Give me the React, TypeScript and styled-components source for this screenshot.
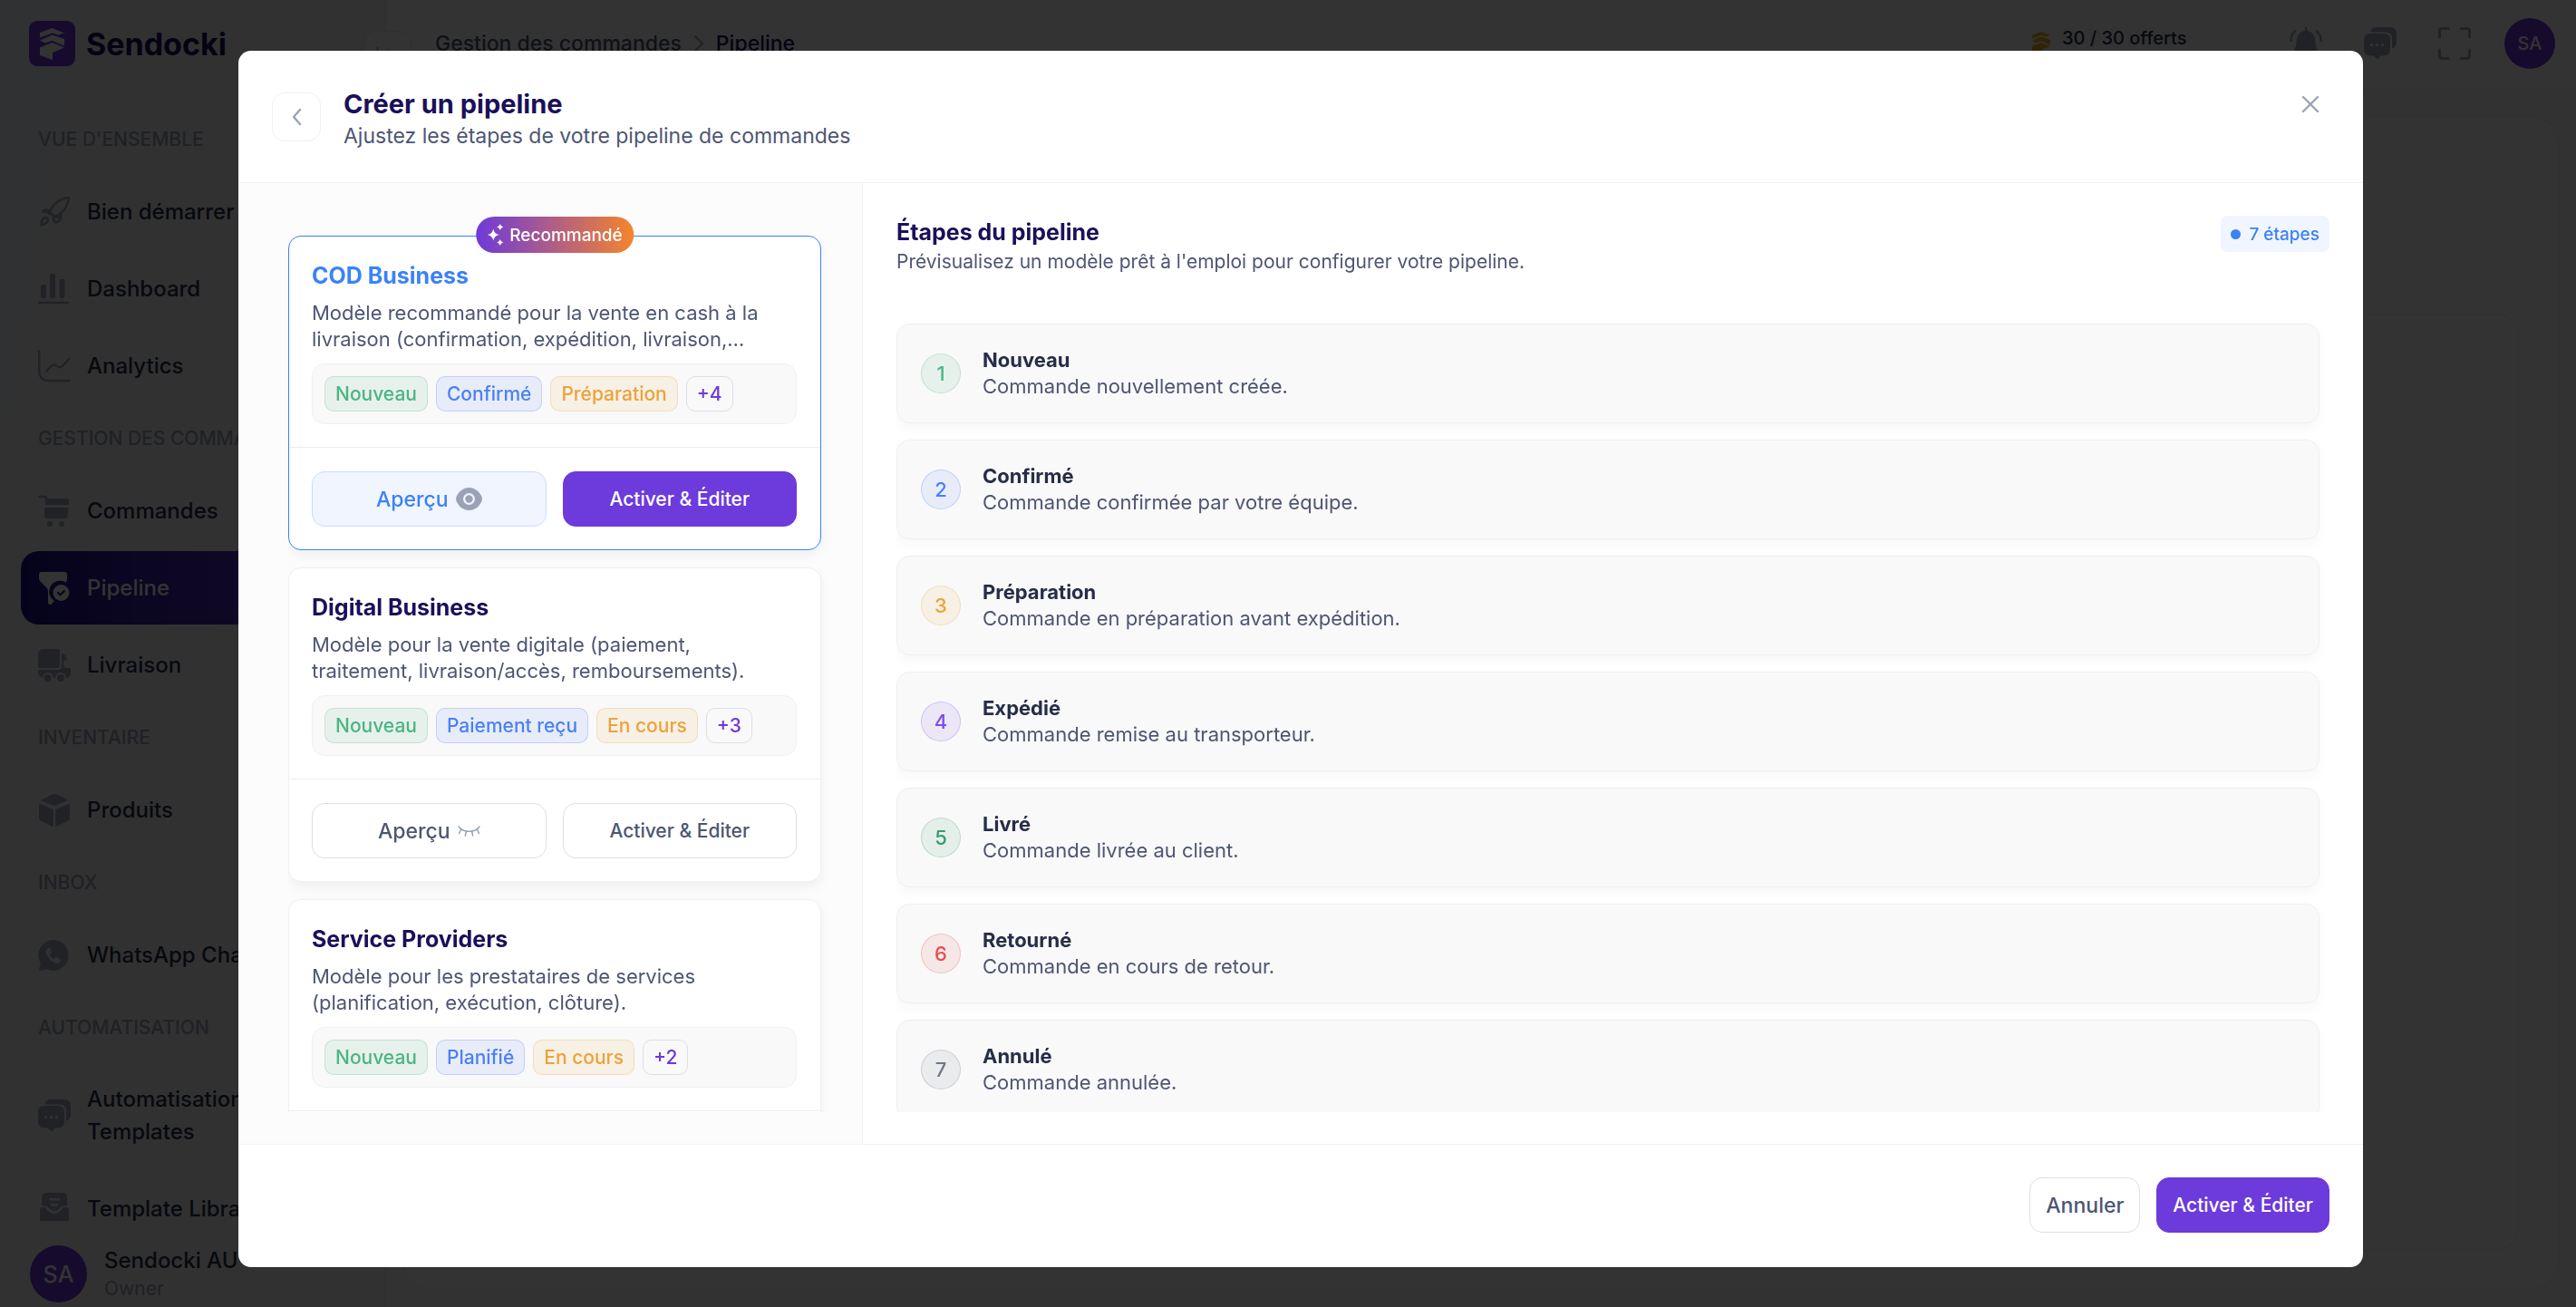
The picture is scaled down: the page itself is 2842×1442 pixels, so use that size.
import React from "react";
import styled, { createGlobalStyle } from "styled-components";

const c = {
  navy: "#1b1059",
  ink: "#262d47",
  text: "#4d5673",
  muted: "#9aa3b5",
  icon: "#a3acbf",
  purple: "#6d3adb",
  blue: "#3b82f6",
  line: "#f1f1f3",
  field: "#dedeea",
};

const Global = createGlobalStyle`
  *, *::before, *::after { box-sizing: border-box; }
  html, body, #root { height: 100%; }
  body { margin: 0; overflow: hidden; background: #fff; }
  body, button { font-family: Inter, "Liberation Sans", sans-serif; }
  h1, h2, h3, p, ul, ol { margin: 0; padding: 0; }
  ul, ol { list-style: none; }
  button { margin: 0; padding: 0; border: 0; background: none; cursor: pointer; }
  a { color: inherit; text-decoration: none; }
  svg { display: block; flex: none; }
`;

/* ---------- application shell ---------- */

const Shell = styled.div`
  display: grid;
  grid-template-columns: 426px minmax(0, 1fr);
  height: 100vh;
  overflow: hidden;
`;

const Sidebar = styled.aside`
  display: flex;
  flex-direction: column;
  min-height: 0;
  border-right: 1px solid #ececf2;
  background: linear-gradient(100deg, #f0f4f8, #f6f6fb 50%, #f4f2f8);
`;

const Brand = styled.a`
  display: flex;
  align-items: center;
  gap: 12px;
  flex: none;
  height: 99px;
  padding: 0 32px 2px;
  border-bottom: 1px solid #ebedf2;
  color: ${c.navy};
  font-size: 34px;
  font-weight: 700;
`;

const LogoTile = styled.span`
  display: grid;
  place-items: center;
  width: 51px;
  height: 50px;
  border-radius: 9px;
  background: ${c.purple};
  color: #fff;
`;

const Nav = styled.nav`
  display: flex;
  flex-direction: column;
  gap: 22px;
  flex: 1;
  min-height: 0;
  overflow: hidden;
  padding: 37px 23px 0;
`;

const NavGroup = styled.section`
  display: flex;
  flex-direction: column;
  flex: none;
  gap: 21px;
`;

const NavLabel = styled.h2`
  padding-left: 19px;
  color: ${c.muted};
  font-size: 21px;
  font-weight: 500;
  line-height: 36px;
  text-transform: uppercase;
  white-space: nowrap;
`;

const NavList = styled.ul`
  display: flex;
  flex-direction: column;
  gap: 4px;
`;

const NavLink = styled.a<{ $active?: boolean }>`
  display: flex;
  align-items: center;
  gap: 18px;
  min-height: 81px;
  padding: 22px 19px;
  border-radius: 20px;
  background: ${(p) => (p.$active ? "linear-gradient(90deg, #1c1088, #6d3adb)" : "none")};
  color: ${(p) => (p.$active ? "#fff" : c.ink)};
  font-size: 24px;
  font-weight: 500;
  line-height: 36px;

  svg { color: ${(p) => (p.$active ? "#fff" : c.icon)}; }
`;

const Profile = styled.div`
  display: flex;
  align-items: center;
  gap: 19px;
  flex: none;
  height: 95px;
  padding: 22px 33px 0;
  background: #f3f3f7;
`;

const Avatar = styled.span<{ $size: number }>`
  display: grid;
  place-items: center;
  flex: none;
  width: ${(p) => p.$size}px;
  height: ${(p) => p.$size}px;
  border-radius: 50%;
  background: ${c.purple};
  color: #fff;
  font-size: ${(p) => (p.$size > 60 ? 25 : 20)}px;
  font-weight: 500;
`;

const ProfileName = styled.p`
  color: ${c.ink};
  font-size: 24px;
  font-weight: 500;
  line-height: 32px;
`;

const ProfileRole = styled.p`
  color: ${c.muted};
  font-size: 21px;
  line-height: 30px;
`;

const Content = styled.div`
  display: flex;
  flex-direction: column;
  min-width: 0;
  background: #fafafa;
`;

const Topbar = styled.header`
  position: relative;
  display: flex;
  align-items: center;
  gap: 37px;
  flex: none;
  height: 99px;
  padding: 0 23px 3px 54px;
  border-bottom: 1px solid #f0f0f2;
  background: #fff;
`;

const Toggle = styled.button`
  position: absolute;
  left: -25px;
  top: 34px;
  display: grid;
  place-items: center;
  width: 53px;
  height: 53px;
  border: 1px solid #e9e9ef;
  border-radius: 14px;
  background: #fff;
  color: ${c.icon};
`;

const Crumbs = styled.nav`
  display: flex;
  align-items: center;
  gap: 12px;
  margin-right: auto;
  color: ${c.text};
  font-size: 23px;
  font-weight: 500;
  line-height: 30px;

  strong { color: ${c.navy}; font-weight: 500; }
  svg { color: ${c.icon}; }
`;

const Quota = styled.div`
  display: grid;
  grid-template-columns: auto 190px;
  align-items: center;
  gap: 6px 13px;
  margin-right: 24px;
  color: ${c.ink};
  font-size: 20px;
  font-weight: 500;
  line-height: 28px;
`;

const Coin = styled.span`
  grid-row: 1 / 3;
  color: #f5ad1e;
`;

const QuotaBar = styled.span`
  height: 6px;
  border-radius: 3px;
  background: #f5ad1e;
`;

const Tools = styled.div`
  display: flex;
  gap: 46px;
`;

const IconButton = styled.button`
  color: ${c.icon};
`;

const Main = styled.main`
  flex: 1;
  min-height: 0;
  padding: 29px 19px 19px;
`;

const Board = styled.div`
  height: 100%;
  padding: 217px 43px 43px 39px;
  border: 1px solid #f1f1f3;
  border-radius: 30px;
  background: #fcfcfc;
`;

const BoardInner = styled.div`
  height: 100%;
  border: 1px solid #f1f1f3;
  border-radius: 24px;
`;

/* ---------- dialog ---------- */

const Overlay = styled.div`
  position: fixed;
  inset: 0;
  display: grid;
  grid-template-rows: minmax(0, 1fr);
  padding: 56px 235px 44px 263px;
  background: rgba(0, 0, 0, 0.8);
`;

const Dialog = styled.div`
  display: flex;
  flex-direction: column;
  min-height: 0;
  border-radius: 14px;
  background: #fff;
  overflow: hidden;
`;

const DialogHeader = styled.header`
  display: flex;
  align-items: center;
  gap: 25px;
  padding: 38px 36px 37px 37px;
  border-bottom: 1px solid ${c.line};
`;

const BackButton = styled.button`
  display: grid;
  place-items: center;
  width: 54px;
  height: 54px;
  border: 1px solid ${c.line};
  border-radius: 14px;
  color: ${c.muted};
`;

const DialogHeading = styled.div`
  flex: 1;
`;

const DialogTitle = styled.h1`
  color: ${c.navy};
  font-size: 29px;
  font-weight: 700;
  line-height: 42px;
`;

const DialogSubtitle = styled.p`
  color: ${c.text};
  font-size: 23px;
  line-height: 28px;
`;

const CloseButton = styled.button`
  display: grid;
  place-items: center;
  align-self: flex-start;
  width: 44px;
  height: 42px;
  color: ${c.muted};
`;

const DialogBody = styled.div`
  display: grid;
  grid-template-columns: 689px minmax(0, 1fr);
  grid-template-rows: minmax(0, 1fr);
  flex: 1;
  min-height: 0;
`;

const TemplatePane = styled.section`
  min-height: 0;
  padding: 36px 35px 35px 55px;
  border-right: 1px solid #f3f3f3;
  background: #fcfcfc;
`;

const TemplateScroll = styled.ul`
  display: flex;
  flex-direction: column;
  gap: 19px;
  height: 100%;
  overflow: hidden;
  padding: 22px 10px 0 0;
`;

const TemplateCard = styled.li<{ $selected?: boolean }>`
  position: relative;
  flex: none;
  border: 1px solid ${(p) => (p.$selected ? c.blue : "#f0f0f0")};
  border-radius: 14px;
  background: #fff;
  box-shadow: 0 6px 14px rgba(0, 0, 0, 0.05);
`;

const Recommended = styled.span`
  position: absolute;
  top: -22px;
  left: 50%;
  display: flex;
  align-items: center;
  gap: 6px;
  height: 40px;
  padding: 0 12px;
  border-radius: 20px;
  background: linear-gradient(90deg, #6d3adb, #f5842c);
  color: #fff;
  font-size: 19px;
  font-weight: 500;
  transform: translateX(-50%);
`;

const TemplateInfo = styled.div`
  padding: 26px 26px 25px 25px;
`;

const TemplateName = styled.h2<{ $selected?: boolean }>`
  margin-bottom: 10px;
  color: ${(p) => (p.$selected ? c.blue : c.navy)};
  font-size: 25px;
  font-weight: 700;
  line-height: 34px;
`;

const TemplateText = styled.p`
  margin-bottom: 12px;
  padding-right: 10px;
  color: ${c.text};
  font-size: 22px;
  line-height: 29px;
`;

const ChipRow = styled.ul`
  display: flex;
  gap: 9px;
  padding: 13px;
  border: 1px solid #f1f1f1;
  border-radius: 14px;
  background: #f9f9f9;
`;

const Chip = styled.li<{ $color?: string }>`
  padding: 0 11px;
  border: 1px solid ${(p) => (p.$color ? p.$color + "40" : c.field)};
  border-radius: 10px;
  background: ${(p) => (p.$color ? p.$color + "1a" : "transparent")};
  color: ${(p) => p.$color || c.purple};
  font-size: 21px;
  font-weight: 500;
  line-height: 37px;
`;

const TemplateActions = styled.div`
  display: grid;
  grid-template-columns: 1fr 1fr;
  gap: 18px;
  padding: 26px 26px 25px 25px;
  border-top: 1px solid #ededef;
`;

const Button = styled.button<{ $tone?: "primary" | "soft"; $large?: boolean }>`
  display: flex;
  align-items: center;
  justify-content: center;
  gap: 8px;
  height: 61px;
  padding: 0 17px;
  border: 1px solid ${(p) => (p.$tone === "primary" ? c.purple : p.$tone === "soft" ? "#cbdefd" : c.field)};
  border-radius: 14px;
  background: ${(p) => (p.$tone === "primary" ? c.purple : p.$tone === "soft" ? "#f0f5ff" : "#fff")};
  color: ${(p) => (p.$tone === "primary" ? "#fff" : p.$tone === "soft" ? c.blue : c.text)};
  font-size: ${(p) => (p.$large ? 23 : 21)}px;
  font-weight: 500;

  svg { color: ${c.muted}; }
`;

const StagePane = styled.section`
  display: flex;
  flex-direction: column;
  gap: 53px;
  min-width: 0;
  min-height: 0;
  padding: 36px 37px 35px;
`;

const StageHeader = styled.header`
  display: flex;
  align-items: flex-start;
  justify-content: space-between;
`;

const StageTitle = styled.h2`
  color: ${c.navy};
  font-size: 25px;
  font-weight: 700;
  line-height: 36px;
`;

const StageSubtitle = styled.p`
  color: ${c.text};
  font-size: 21px;
  line-height: 30px;
`;

const StageCount = styled.span`
  display: flex;
  align-items: center;
  gap: 9px;
  height: 40px;
  padding: 0 11px;
  border-radius: 8px;
  background: #f0f5ff;
  color: ${c.blue};
  font-size: 19px;
  font-weight: 500;

  &::before {
    content: "";
    width: 11px;
    height: 11px;
    border-radius: 50%;
    background: ${c.blue};
  }
`;

const StageList = styled.ol`
  display: flex;
  flex-direction: column;
  gap: 18px;
  flex: 1;
  min-height: 0;
  overflow: hidden;
  padding-right: 11px;
`;

const StageItem = styled.li`
  display: flex;
  align-items: center;
  gap: 24px;
  flex: none;
  padding: 25px 26px;
  border: 1px solid #f0f0f0;
  border-radius: 14px;
  background: #f9f9f9;
  box-shadow: 0 6px 14px rgba(0, 0, 0, 0.03);
`;

const StageNumber = styled.span<{ $color: string }>`
  display: grid;
  place-items: center;
  flex: none;
  width: 44px;
  height: 44px;
  border: 1px solid ${(p) => p.$color}40;
  border-radius: 50%;
  background: ${(p) => p.$color}1a;
  color: ${(p) => p.$color};
  font-size: 22px;
  font-weight: 500;
`;

const StageName = styled.h3`
  color: ${c.ink};
  font-size: 22px;
  font-weight: 700;
  line-height: 29px;
`;

const StageText = styled.p`
  color: ${c.text};
  font-size: 22px;
  line-height: 29px;
`;

const DialogFooter = styled.footer`
  display: flex;
  justify-content: flex-end;
  gap: 18px;
  padding: 36px 37px 38px;
  border-top: 1px solid ${c.line};
`;

/* ---------- icons ---------- */

const Svg = ({ size = 36, children }: { size?: number; children: React.ReactNode }) => (
  <svg width={size} height={size} viewBox="0 0 36 36" fill="none" aria-hidden="true">
    {children}
  </svg>
);

const stroke = {
  stroke: "currentColor",
  strokeWidth: 2.4,
  strokeLinecap: "round" as const,
  strokeLinejoin: "round" as const,
};

const LogoMark = ({ width = 27, height = 35 }) => (
  <svg width={width} height={height} viewBox="0 0 27 35" fill="currentColor" aria-hidden="true">
    <path d="M0 5 13.500 0 27 5.500 20.500 7.500 13.500 5.500 0 10.500Z" />
    <path d="M0 13.500 13.500 7.500 27 12V19.500L13.500 14 6 16.500Z" />
    <path d="M0 21.500 13.500 16 27 21.500 14 27V35L0 30Z" />
  </svg>
);

const RocketIcon = () => (
  <Svg>
    <g {...stroke}>
      <path d="M13 18C16 9 24 3 34 2c-1 10-7 18-16 21z" />
      <path d="M13.500 17.500C10 14.500 6 15 5.500 18c3-.5 6 .5 8 2.500" />
      <path d="M18 23c3 1.500 7 1.500 7.500-2.500 0 5-2 9-7 9-.8-2-1.200-3-2-5" />
      <path d="M3.500 32.500c0-5 2-8 5-8.500 2.500 0 3.500 3 1.500 5-1.500 2-4 2.500-6.500 3.500z" />
    </g>
  </Svg>
);

const BarsIcon = () => (
  <Svg>
    <rect x="3" y="13" width="6" height="15" rx="2" fill="currentColor" />
    <rect x="13" y="1" width="6" height="27" rx="2" fill="currentColor" />
    <rect x="23.500" y="7" width="6" height="21" rx="2" fill="currentColor" />
    <path d="M1 33h32" {...stroke} />
  </Svg>
);

const ChartIcon = () => (
  <Svg>
    <g {...stroke}>
      <path d="M1.200 1.500V23c0 7 4 11 10 11h23.600" />
      <path d="M9 24c5-7 9-9 12-6s6 1 13-8" />
    </g>
  </Svg>
);

const CartIcon = () => (
  <Svg>
    <path d="M1.500 2h6c1.500 0 2 2 2.500 4" {...stroke} />
    <path d="M8 4h23q3 0 3 3v4H8zM7 14h26.500l-1 9q-.3 3-3 3H10q-3 0-3-3z" fill="currentColor" />
    <circle cx="13" cy="32" r="3" fill="currentColor" />
    <circle cx="26" cy="32" r="3" fill="currentColor" />
  </Svg>
);

const FunnelIcon = () => (
  <Svg>
    <path
      d="M4 0h25q3 0 3 3v5q0 2-1.500 3.500A11 11 0 0 0 18 32l-3.500 4q-3.500.5-3.500-2.500V21q0-2-1.500-3.500L2.500 10.500Q1 9 1 7V3q0-3 3-3z"
      fill="currentColor"
    />
    <path
      fillRule="evenodd"
      d="M25.500 14a9 9 0 1 1 0 18 9 9 0 0 1 0-18zm-4.900 9 3.700 3.700 6-5.300-1.500-1.700-4.500 4-2.200-2.200z"
      fill="currentColor"
    />
  </Svg>
);

const TruckIcon = () => (
  <Svg>
    <path d="M6 0h15q3 0 3 3v14q0 4-3 4H0V6q0-6 6-6z" fill="currentColor" />
    <path
      d="M26 5c4 0 5.500 4 6.500 7-3.500 0-4.500 1-4.500 4s1 5 4 5h4v5q0 6-5 6a6 6 0 0 0-12 0h-2a6 6 0 0 0-12 0Q0 31 0 23h22q4 0 4-5z"
      fill="currentColor"
    />
    <circle cx="10.500" cy="32" r="4" fill="currentColor" />
    <circle cx="25" cy="32" r="4" fill="currentColor" />
  </Svg>
);

const BoxIcon = () => (
  <Svg>
    <path d="M18 0q2 0 4 1l11 6-15 6L3 7l11-6q2-1 4-1z" fill="currentColor" />
    <path d="M1 10.500 16.800 17v19q-2-.3-4-1.500L3 29.500Q1 28.500 1 26zM35 10.500 19.200 17v19q2-.3 4-1.500l9.800-5q2-1 2-3.500z" fill="currentColor" />
  </Svg>
);

const WhatsAppIcon = () => (
  <Svg>
    <path
      fillRule="evenodd"
      d="M17 1a17 17 0 1 1-8 32.200L3 34.800Q.8 35 1.200 33l1.600-6.200A17 17 0 0 1 17 1zm-5 8.500c-3 1.500-4 4-2.500 7.500 2 4.500 5 7.500 9.500 9.500 3 1.500 5.500 0 6-2.500 0-2-5-4.500-6-3.500l-1.500 1.500c-2-1-3.500-2.500-4.500-4.500L14.500 16c.8-1-1-6.500-2.500-6.500z"
      fill="currentColor"
    />
  </Svg>
);

const ChatIcon = () => (
  <Svg>
    <path d="M13 0h16q7 0 7 7v10q0 5-5 6.500V13q0-7.500-7.500-7.500H7.500Q8 0 13 0z" fill="currentColor" />
    <path
      fillRule="evenodd"
      d="M7 7h15q7 0 7 7v10q0 7.500-7 7.500h-3.500L15 36l-4-4.500H7Q0 31.500 0 24V14q0-7 7-7zm1.500 11a1.600 1.600 0 1 0 0 3.200 1.600 1.600 0 0 0 0-3.200zm6 0a1.600 1.600 0 1 0 0 3.200 1.600 1.600 0 0 0 0-3.200zm6 0a1.600 1.600 0 1 0 0 3.200 1.600 1.600 0 0 0 0-3.200z"
      fill="currentColor"
    />
  </Svg>
);

const LibraryIcon = () => (
  <Svg>
    <path
      fillRule="evenodd"
      d="M9 0h18q5 0 5 5v9l-6 1q-4 5-8 5t-8-5l-6-1V5q0-5 5-5zm3 6v2.500h12V6zm2 6v2.500h8V12z"
      fill="currentColor"
    />
    <path d="M2 18.500q0-2.500 3-2.500h3q4.500 7 10 7t10-7h3q3 0 3 2.500V36H2z" fill="currentColor" />
  </Svg>
);

const BellIcon = () => (
  <Svg>
    <path d="M18 1v4" {...stroke} />
    <path d="M18 4c-7 0-10 5-10.500 12C7 22 5.500 25 4 29h28c-1.500-4-3-7-3.500-13C28 9 25 4 18 4z" fill="currentColor" />
    <path d="M6 4.500Q1 9 1.500 15M30 4.500q5 4.500 4.500 10.500M14 33q4 3 8 0" {...stroke} />
  </Svg>
);

const ExpandIcon = () => (
  <Svg>
    <path d="M1.500 11V4q0-2.500 2.500-2.500h7M25 1.500h7q2.500 0 2.500 2.500v7M34.500 25v7q0 2.500-2.500 2.500h-7M11 34.500H4q-2.500 0-2.500-2.500v-7" {...stroke} strokeWidth={3} />
  </Svg>
);

const CollapseIcon = () => (
  <Svg size={26}>
    <path d="M2 6v24M34 18H12M19 10l-8 8 8 8" {...stroke} />
  </Svg>
);

const ChevronIcon = ({ left }: { left?: boolean }) => (
  <svg width="14" height="22" viewBox="0 0 14 22" fill="none" aria-hidden="true">
    <path d={left ? "M11 3 4 11l7 8" : "M3 3l8 8-8 8"} {...stroke} />
  </svg>
);

const CrossIcon = () => (
  <svg width="20" height="20" viewBox="0 0 20 20" fill="none" aria-hidden="true">
    <path d="m2 2 16 16M18 2 2 18" {...stroke} />
  </svg>
);

const EyeIcon = () => (
  <svg width="29" height="25" viewBox="0 0 29 25" aria-hidden="true">
    <path
      fillRule="evenodd"
      d="M14.500 0C21 0 26 4.500 28.300 9.500q1.200 3 0 6C26 20.500 21 25 14.500 25S3 20.500.7 15.500q-1.200-3 0-6C3 4.500 8 0 14.500 0zm0 6a6.500 6.500 0 1 0 0 13 6.500 6.500 0 0 0 0-13zm0 2.300a4.200 4.200 0 1 1 0 8.400 4.200 4.200 0 0 1 0-8.400z"
      fill="currentColor"
    />
  </svg>
);

const EyeClosedIcon = () => (
  <svg width="25" height="25" viewBox="0 0 25 25" fill="none" aria-hidden="true">
    <path
      d="M1 8c5 7 18 7 23 0M4 10.500 1.500 15.500M9.500 12.800 8.300 18M15.500 12.800 16.700 18M21 10.500l2.500 5"
      stroke="currentColor"
      strokeWidth="1.500"
      strokeLinecap="round"
    />
  </svg>
);

const SparkleIcon = () => (
  <svg width="19" height="24" viewBox="0 0 19 24" fill="currentColor" aria-hidden="true">
    <path d="M7 5.500q1 5.500 6.500 6.500Q8 13 7 18.500 6 13 .5 12 6 11 7 5.500zM14.500 0q.6 3 3.500 3.500-2.900.5-3.500 3.500-.6-3-3.500-3.500Q13.900 3 14.500 0zM14.500 17q.6 3 3.500 3.500-2.900.5-3.500 3.500-.6-3-3.500-3.500 2.900-.5 3.500-3.500z" />
  </svg>
);

/* ---------- data ---------- */

const tone = {
  green: "#4bb582",
  blue: "#4a80f5",
  amber: "#eca23a",
  violet: "#7c4ded",
  emerald: "#3a9a6c",
  red: "#e4504f",
  gray: "#6f7686",
};

const navigation = [
  {
    label: "Vue d'ensemble",
    items: [
      { text: "Bien démarrer", icon: <RocketIcon /> },
      { text: "Dashboard", icon: <BarsIcon /> },
      { text: "Analytics", icon: <ChartIcon /> },
    ],
  },
  {
    label: "Gestion des commandes",
    items: [
      { text: "Commandes", icon: <CartIcon /> },
      { text: "Pipeline", icon: <FunnelIcon />, active: true },
      { text: "Livraison", icon: <TruckIcon /> },
    ],
  },
  { label: "Inventaire", items: [{ text: "Produits", icon: <BoxIcon /> }] },
  { label: "Inbox", items: [{ text: "WhatsApp Chat", icon: <WhatsAppIcon /> }] },
  {
    label: "Automatisation",
    items: [
      { text: "Automatisation Templates", icon: <ChatIcon /> },
      { text: "Template Library", icon: <LibraryIcon /> },
    ],
  },
];

const templates = [
  {
    name: "COD Business",
    text: "Modèle recommandé pour la vente en cash à la livraison (confirmation, expédition, livraison,…",
    chips: [["Nouveau", tone.green], ["Confirmé", tone.blue], ["Préparation", tone.amber]],
    more: "+4",
    selected: true,
  },
  {
    name: "Digital Business",
    text: "Modèle pour la vente digitale (paiement, traitement, livraison/accès, remboursements).",
    chips: [["Nouveau", tone.green], ["Paiement reçu", tone.blue], ["En cours", tone.amber]],
    more: "+3",
    selected: false,
  },
  {
    name: "Service Providers",
    text: "Modèle pour les prestataires de services (planification, exécution, clôture).",
    chips: [["Nouveau", tone.green], ["Planifié", tone.blue], ["En cours", tone.amber]],
    more: "+2",
    selected: false,
  },
];

const stages = [
  { name: "Nouveau", text: "Commande nouvellement créée.", color: tone.green },
  { name: "Confirmé", text: "Commande confirmée par votre équipe.", color: tone.blue },
  { name: "Préparation", text: "Commande en préparation avant expédition.", color: tone.amber },
  { name: "Expédié", text: "Commande remise au transporteur.", color: tone.violet },
  { name: "Livré", text: "Commande livrée au client.", color: tone.emerald },
  { name: "Retourné", text: "Commande en cours de retour.", color: tone.red },
  { name: "Annulé", text: "Commande annulée.", color: tone.gray },
];

/* ---------- page ---------- */

export default function App() {
  return (
    <>
      <Global />
      <Shell>
        <Sidebar>
          <Brand href="#">
            <LogoTile><LogoMark /></LogoTile>
            Sendocki
          </Brand>
          <Nav>
            {navigation.map((group) => (
              <NavGroup key={group.label}>
                <NavLabel>{group.label}</NavLabel>
                <NavList>
                  {group.items.map((item: { text: string; icon: React.ReactNode; active?: boolean }) => (
                    <li key={item.text}>
                      <NavLink href="#" $active={item.active}>
                        {item.icon}
                        {item.text}
                      </NavLink>
                    </li>
                  ))}
                </NavList>
              </NavGroup>
            ))}
          </Nav>
          <Profile>
            <Avatar $size={63}>SA</Avatar>
            <div>
              <ProfileName>Sendocki AU</ProfileName>
              <ProfileRole>Owner</ProfileRole>
            </div>
          </Profile>
        </Sidebar>
        <Content>
          <Topbar>
            <Toggle aria-label="Réduire le menu"><CollapseIcon /></Toggle>
            <Crumbs>
              <a href="#">Gestion des commandes</a>
              <ChevronIcon />
              <strong>Pipeline</strong>
            </Crumbs>
            <Quota>
              <Coin><LogoMark width={20} height={26} /></Coin>
              <span>30 / 30 offerts</span>
              <QuotaBar />
            </Quota>
            <Tools>
              <IconButton aria-label="Notifications"><BellIcon /></IconButton>
              <IconButton aria-label="Messages"><ChatIcon /></IconButton>
              <IconButton aria-label="Plein écran"><ExpandIcon /></IconButton>
            </Tools>
            <Avatar $size={56}>SA</Avatar>
          </Topbar>
          <Main>
            <Board><BoardInner /></Board>
          </Main>
        </Content>
      </Shell>

      <Overlay>
        <Dialog role="dialog" aria-modal="true" aria-labelledby="dialog-title">
          <DialogHeader>
            <BackButton aria-label="Retour"><ChevronIcon left /></BackButton>
            <DialogHeading>
              <DialogTitle id="dialog-title">Créer un pipeline</DialogTitle>
              <DialogSubtitle>Ajustez les étapes de votre pipeline de commandes</DialogSubtitle>
            </DialogHeading>
            <CloseButton aria-label="Fermer"><CrossIcon /></CloseButton>
          </DialogHeader>

          <DialogBody>
            <TemplatePane>
              <TemplateScroll>
                {templates.map((t) => (
                  <TemplateCard key={t.name} $selected={t.selected}>
                    {t.selected && (
                      <Recommended><SparkleIcon />Recommandé</Recommended>
                    )}
                    <TemplateInfo>
                      <TemplateName $selected={t.selected}>{t.name}</TemplateName>
                      <TemplateText>{t.text}</TemplateText>
                      <ChipRow>
                        {t.chips.map(([label, color]) => (
                          <Chip key={label} $color={color}>{label}</Chip>
                        ))}
                        <Chip>{t.more}</Chip>
                      </ChipRow>
                    </TemplateInfo>
                    <TemplateActions>
                      <Button $large $tone={t.selected ? "soft" : undefined}>
                        Aperçu {t.selected ? <EyeIcon /> : <EyeClosedIcon />}
                      </Button>
                      <Button $tone={t.selected ? "primary" : undefined}>Activer &amp; Éditer</Button>
                    </TemplateActions>
                  </TemplateCard>
                ))}
              </TemplateScroll>
            </TemplatePane>

            <StagePane>
              <StageHeader>
                <div>
                  <StageTitle>Étapes du pipeline</StageTitle>
                  <StageSubtitle>Prévisualisez un modèle prêt à l'emploi pour configurer votre pipeline.</StageSubtitle>
                </div>
                <StageCount>7 étapes</StageCount>
              </StageHeader>
              <StageList>
                {stages.map((s, i) => (
                  <StageItem key={s.name}>
                    <StageNumber $color={s.color}>{i + 1}</StageNumber>
                    <div>
                      <StageName>{s.name}</StageName>
                      <StageText>{s.text}</StageText>
                    </div>
                  </StageItem>
                ))}
              </StageList>
            </StagePane>
          </DialogBody>

          <DialogFooter>
            <Button $large>Annuler</Button>
            <Button $tone="primary">Activer &amp; Éditer</Button>
          </DialogFooter>
        </Dialog>
      </Overlay>
    </>
  );
}
